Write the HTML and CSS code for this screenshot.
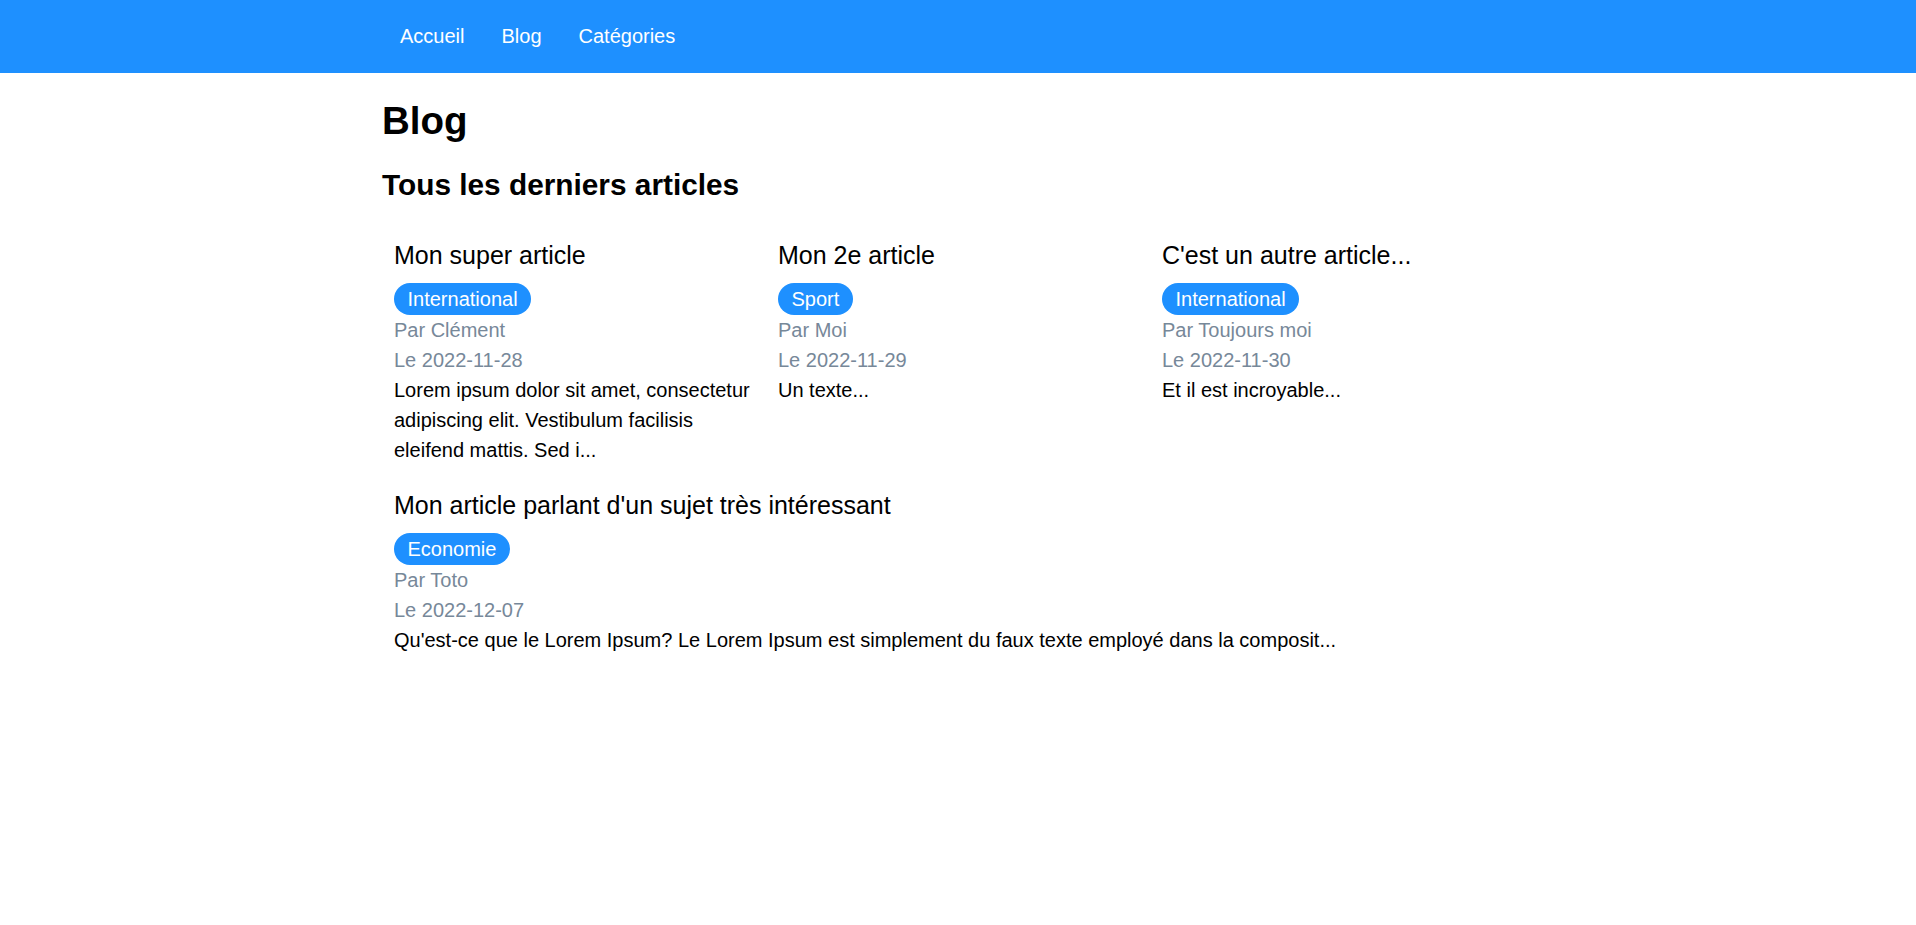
FILE: index.html
```html
<!DOCTYPE html>
<html lang="fr">
<head>
<meta charset="utf-8">
<title>Blog</title>
<link rel="stylesheet" href="styles.css">
</head>
<body>
<header class="topbar">
  <nav class="nav">
    <a class="nav-link" href="#">Accueil</a>
    <a class="nav-link" href="#">Blog</a>
    <a class="nav-link" href="#">Catégories</a>
  </nav>
</header>
<main class="content">
  <h1 class="page-title">Blog</h1>
  <h2 class="section-title">Tous les derniers articles</h2>
  <div class="cards">
    <article class="card">
      <h3 class="card-title">Mon super article</h3>
      <div class="tags"><span class="badge">International</span></div>
      <p class="meta">Par Clément</p>
      <p class="meta">Le 2022-11-28</p>
      <p class="excerpt">Lorem ipsum dolor sit amet, consectetur adipiscing elit. Vestibulum facilisis eleifend mattis. Sed i...</p>
    </article>
    <article class="card">
      <h3 class="card-title">Mon 2e article</h3>
      <div class="tags"><span class="badge">Sport</span></div>
      <p class="meta">Par Moi</p>
      <p class="meta">Le 2022-11-29</p>
      <p class="excerpt">Un texte...</p>
    </article>
    <article class="card">
      <h3 class="card-title">C'est un autre article...</h3>
      <div class="tags"><span class="badge">International</span></div>
      <p class="meta">Par Toujours moi</p>
      <p class="meta">Le 2022-11-30</p>
      <p class="excerpt">Et il est incroyable...</p>
    </article>
    <article class="card">
      <h3 class="card-title">Mon article parlant d'un sujet très intéressant</h3>
      <div class="tags"><span class="badge">Economie</span></div>
      <p class="meta">Par Toto</p>
      <p class="meta">Le 2022-12-07</p>
      <p class="excerpt">Qu'est-ce que le Lorem Ipsum? Le Lorem Ipsum est simplement du faux texte employé dans la composit...</p>
    </article>
  </div>
</main>
</body>
</html>
```

FILE: styles.css
```css
html, body {
  margin: 0;
  padding: 0;
  background: #ffffff;
}

body {
  font-family: "Liberation Sans", Arial, sans-serif;
  font-size: 20px;
  line-height: 30px;
  color: #000000;
}

.topbar {
  background: #1e90ff;
  height: 73px;
}

.nav {
  width: 1153px;
  margin: 0 auto;
  height: 100%;
  display: flex;
  align-items: center;
}

.nav-link {
  color: #ffffff;
  text-decoration: none;
  font-size: 20px;
  line-height: 23px;
  padding: 0 18.5px;
}

.content {
  width: 1152px;
  margin: 0 auto;
  padding-top: 26px;
}

.page-title {
  font-size: 38.5px;
  line-height: 44px;
  font-weight: bold;
  margin: 0 0 25px;
}

.section-title {
  font-size: 29.8px;
  line-height: 34px;
  font-weight: bold;
  margin: 0 0 24px;
}

.cards {
  display: flex;
  flex-wrap: wrap;
}

.card {
  flex: 1 1 30%;
  padding: 11px 12px;
}

.card-title {
  font-size: 25px;
  line-height: 37.5px;
  font-weight: normal;
  margin: 0 0 8.5px;
}

.tags {
  display: flex;
}

.badge {
  background: #1e90ff;
  color: #ffffff;
  font-size: 20px;
  line-height: 30px;
  padding: 1px 13.5px;
  border-radius: 16px;
}

.meta {
  margin: 0;
  color: #778899;
}

.excerpt {
  margin: 0;
}
```
